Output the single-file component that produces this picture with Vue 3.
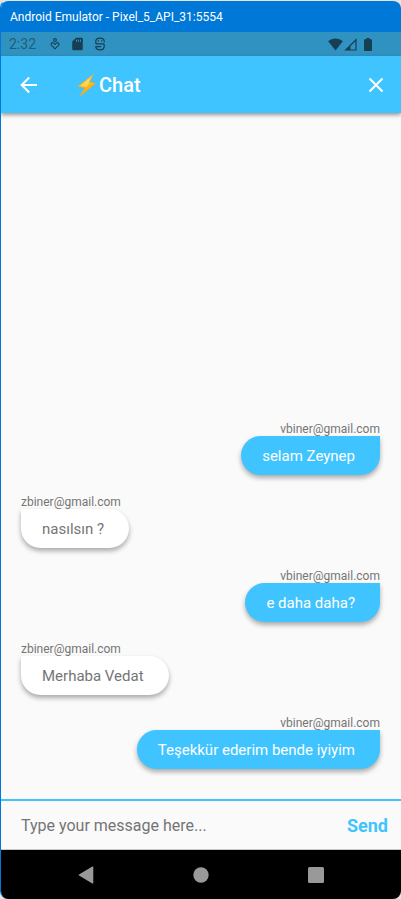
<script setup>
import { ref } from 'vue'

const draft = ref('')
const messages = ref([
  { id: 1, sender: 'vbiner@gmail.com', text: 'selam Zeynep', mine: true },
  { id: 2, sender: 'zbiner@gmail.com', text: 'nasılsın ?', mine: false },
  { id: 3, sender: 'vbiner@gmail.com', text: 'e daha daha?', mine: true },
  { id: 4, sender: 'zbiner@gmail.com', text: 'Merhaba Vedat', mine: false },
  { id: 5, sender: 'vbiner@gmail.com', text: 'Teşekkür ederim bende iyiyim', mine: true },
])

function send() {
  const text = draft.value.trim()
  if (!text) return
  messages.value.push({ id: Date.now(), sender: 'vbiner@gmail.com', text, mine: true })
  draft.value = ''
}
</script>

<template>
  <div class="window">
    <header class="titlebar">Android Emulator - Pixel_5_API_31:5554</header>

    <div class="statusbar">
      <span class="clock">2:32</span>
      <svg width="10" height="14" viewBox="0 0 10 14" fill="none" stroke="currentColor" stroke-width="1.1">
        <circle cx="5" cy="3" r="1.400" />
        <path d="M5 11.800 1.500 8.300a1.500 1.500 0 0 1 2.200-2.100L5 7.500l1.300-1.300a1.500 1.500 0 0 1 2.200 2.100Z" />
      </svg>
      <svg class="card" width="11" height="14" viewBox="0 0 11 14">
        <path fill="currentColor" fill-rule="evenodd" d="M4 .8h5.600A1.200 1.200 0 0 1 10.800 2v10a1.200 1.200 0 0 1-1.200 1.200H1.400A1.200 1.200 0 0 1 .2 12V4.600ZM4 2.600v2.200h1V2.600Zm2 0v2.200h1V2.600Zm2 0v2.200h1V2.600Z" />
      </svg>
      <svg class="face" width="10" height="14" viewBox="0 0 10 14" fill="none" stroke="currentColor" stroke-width="1.2">
        <path d="M.8 6.800V4.400C.8 2.200 2.400 1.200 5 1.200s4.200 1 4.200 3.200v1.200M.8 6.800h7.400a1 1 0 0 1 1 1v1.400c0 2.400-1.600 3.600-4.200 3.600S.8 11.800.8 9.600H6" />
        <path d="M3.300 3.200v1.400M6.700 3.200v1.400" />
      </svg>
      <span class="spacer"></span>
      <svg width="15" height="13" viewBox="0 0 15 13">
        <path fill="currentColor" d="M.2 3.200C4.200-.5 10.800-.5 14.800 3.200L7.500 12.600Z" />
      </svg>
      <svg class="signal" width="13" height="13" viewBox="0 0 13 13">
        <path fill="currentColor" fill-rule="evenodd" d="M12.600.3v12.300H.3ZM11.400 3.200 6.400 8.200v3.200h5Z" />
      </svg>
      <svg class="battery" width="8" height="13" viewBox="0 0 8 13">
        <path fill="currentColor" d="M2.500 0h3v1.200h1.700a.8.8 0 0 1 .8.8v10a1 1 0 0 1-1 1H1a1 1 0 0 1-1-1V2a.8.8 0 0 1 .8-.8h1.700Z" />
      </svg>
    </div>

    <div class="appbar">
      <button class="icon-button" type="button" aria-label="Back">
        <svg width="18" height="18" viewBox="0 0 18 18" fill="none" stroke="currentColor" stroke-width="2">
          <path d="M17 9H2.200M9.200 1.500 1.700 9l7.500 7.500" />
        </svg>
      </button>
      <h1 class="heading">
        <svg width="20" height="24" viewBox="0 0 20 24" aria-hidden="true">
          <path fill="#fcc21b" stroke="#f2a52b" stroke-width=".6" stroke-linejoin="round" d="M16.600 1 .9 13.400l7 1.400L3 23.300 18.600 10.400l-6.600-1.600Z" />
          <path fill="#f79329" opacity=".35" d="M7.900 14.800 3 23.300 18.600 10.400l-2-.5Z" />
          <path fill="#fdd85a" d="M14.800 3.300 3.600 12.700l6.300 1.100Z" />
        </svg>
        <span>Chat</span>
      </h1>
      <button class="icon-button" type="button" aria-label="Close">
        <svg width="16" height="16" viewBox="0 0 16 16" fill="none" stroke="currentColor" stroke-width="2">
          <path d="m1.500 1.500 13 13M14.500 1.500l-13 13" />
        </svg>
      </button>
    </div>

    <main class="thread">
      <article v-for="message in messages" :key="message.id" class="message" :class="{ mine: message.mine }">
        <span class="sender">{{ message.sender }}</span>
        <p class="bubble">{{ message.text }}</p>
      </article>
    </main>

    <form class="composer" @submit.prevent="send">
      <input v-model="draft" class="field" type="text" placeholder="Type your message here..." aria-label="Message" />
      <button class="send" type="submit">Send</button>
    </form>

    <nav class="navbar" aria-label="System">
      <button class="nav-button" type="button" aria-label="Back">
        <svg width="16" height="18" viewBox="0 0 16 18"><path fill="currentColor" d="M14.300.6c.5-.3 1 0 1 .5v15.800c0 .5-.5.8-1 .5L1 9.600a.7.7 0 0 1 0-1.200Z" /></svg>
      </button>
      <button class="nav-button" type="button" aria-label="Home">
        <svg width="16" height="16" viewBox="0 0 16 16"><circle cx="8" cy="8" r="7.700" fill="currentColor" /></svg>
      </button>
      <button class="nav-button" type="button" aria-label="Overview">
        <svg width="16" height="16" viewBox="0 0 16 16"><rect width="16" height="16" rx="1.500" fill="currentColor" /></svg>
      </button>
    </nav>
  </div>
</template>

<style>
body {
  margin: 0;
  background: #e4e4e4;
}
</style>

<style scoped>
.window {
  box-sizing: border-box;
  display: flex;
  flex-direction: column;
  height: 100vh;
  border-top: 1px solid #e4e4e4;
  border-left: 1px solid #0078d7;
  border-radius: 8px;
  overflow: hidden;
  background: #fafafa;
  font-family: Roboto, "Liberation Sans", sans-serif;
}

button {
  display: flex;
  align-items: center;
  justify-content: center;
  margin: 0;
  padding: 0;
  border: 0;
  background: none;
  color: inherit;
  font-family: inherit;
  cursor: pointer;
}

svg {
  display: block;
  flex: none;
}

.titlebar {
  flex: none;
  padding: 1px 9px 0;
  background: #0078d7;
  color: #fff;
  font-size: 12px;
  line-height: 30px;
  white-space: nowrap;
}

.statusbar {
  display: flex;
  flex: none;
  align-items: center;
  height: 24px;
  padding: 0 29px 0 8px;
  background: #3092c0;
  color: #163f54;
}

.clock {
  margin-right: 14px;
  color: #235d79;
  font-size: 14px;
  line-height: 24px;
}

.card {
  margin-left: 12px;
}

.face {
  margin-left: 12px;
}

.spacer {
  flex: 1;
}

.signal {
  margin-left: 1px;
}

.battery {
  margin-left: 7px;
}

.appbar {
  z-index: 1;
  display: flex;
  flex: none;
  align-items: center;
  height: 57px;
  background: #40c4ff;
  box-shadow: 0 2px 4px rgba(0, 0, 0, 0.4);
  color: #fff;
}

.icon-button {
  width: 56px;
  height: 56px;
}

.icon-button:last-child {
  width: 50px;
}

.heading {
  display: flex;
  flex: 1;
  align-items: center;
  gap: 2px;
  margin: 0;
  padding-left: 20px;
  font-size: 20px;
  font-weight: 500;
  line-height: 24px;
}

.thread {
  display: flex;
  flex: 1;
  flex-direction: column;
  justify-content: flex-end;
  min-height: 0;
  padding: 0 21px 30px 20px;
}

.message {
  display: flex;
  flex-direction: column;
  align-items: flex-start;
  margin-top: 21px;
}

.message.mine {
  align-items: flex-end;
  margin-top: 22px;
}

.sender {
  color: #757575;
  font-size: 12px;
  line-height: 13px;
}

.bubble {
  margin: 0;
  padding: 11px 25px 10px 21px;
  border-radius: 0 20px 20px 20px;
  background: #fff;
  box-shadow: 0 3px 5px rgba(0, 0, 0, 0.32);
  color: #757575;
  font-size: 15px;
  line-height: 18px;
}

.mine .bubble {
  border-radius: 20px 0 20px 20px;
  background: #40c4ff;
  color: #fff;
}

.composer {
  display: flex;
  flex: none;
  align-items: center;
  border-top: 2px solid #40c4ff;
  border-bottom: 1px solid #c8c8c8;
}

.field {
  flex: 1;
  box-sizing: border-box;
  min-width: 0;
  height: 48px;
  padding: 0 20px;
  border: 0;
  outline: none;
  background: none;
  color: #212121;
  font-family: inherit;
  font-size: 16px;
}

.field::placeholder {
  color: #757575;
  opacity: 1;
}

.send {
  padding: 2px 13px 0;
  color: #40c4ff;
  font-size: 18px;
  font-weight: 700;
  line-height: 46px;
}

.navbar {
  display: flex;
  flex: none;
  align-items: center;
  justify-content: center;
  height: 49px;
  padding-right: 1px;
  background: #000;
  color: #999;
}

.nav-button {
  width: 115px;
  height: 48px;
}
</style>
